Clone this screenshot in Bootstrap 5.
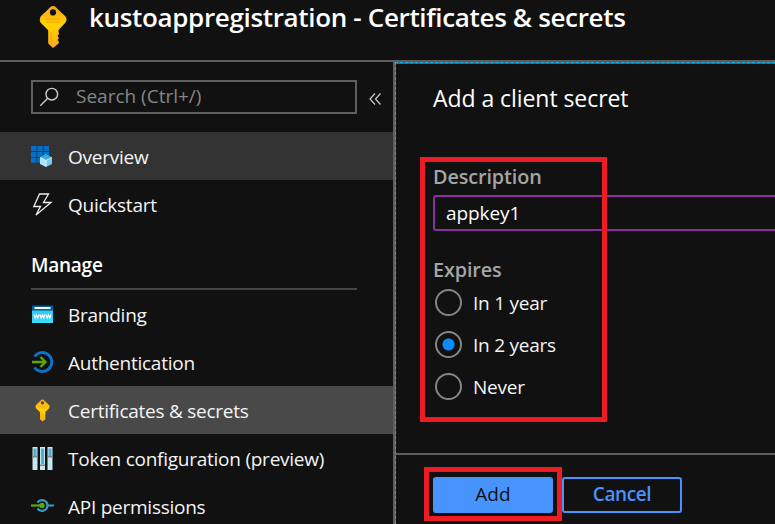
<!DOCTYPE html>
<html lang="en">
<head>
<meta charset="utf-8">
<title>kustoappregistration - Certificates &amp; secrets</title>
<meta name="viewport" content="width=device-width, initial-scale=1">
<link href="https://cdn.jsdelivr.net/npm/bootstrap@5.3.0/dist/css/bootstrap.min.css" rel="stylesheet">
<style>
body{background:#111;color:#f4f4f4;font-family:"Open Sans","Noto Sans",sans-serif;font-size:19px;line-height:24px;height:524px;overflow:hidden}
.topbar{height:62px;border-bottom:2px solid #5e5e5e;padding-left:38px}
.topbar svg{margin-top:5px}
.title{font-size:26px;line-height:34px;font-weight:600;color:#fff;margin:0 0 0 21px;letter-spacing:-.34px;white-space:nowrap}
.side{width:393px;padding-top:18px}
.search{width:326px;height:34px;margin-left:31px;border:2px solid #5e5e5e;padding:0;background:#111}
.search input{background:transparent;border:0;color:#868686;padding:0 0 2px;margin-left:17px;width:240px;height:28px;font-size:19px;outline:0}
.search input::placeholder{color:#868686;opacity:1}
.search svg{margin-left:6px}
.fold{margin:4px 0 0 12px}
.side .nav-item{height:48px;padding:2px 0 0 31px;letter-spacing:-.25px;white-space:nowrap}
.side .nav-item svg{width:23px;height:23px;flex:none;margin:0 14px 2px 0}
.side .first{margin-top:18px}
.hov{background:#333}
.cur{background:#494949}
.group-title{font-size:19px;line-height:24px;font-weight:600;color:#fff;margin:25px 0 0 31px;letter-spacing:-.25px;width:326px;height:37px;border-bottom:2px solid #444}
.blade{border-left:2px solid #5e5e5e;background:#111}
.focus-edge{border:solid #5e5e5e;border-width:2px 0 0 1px;position:relative}
.focus-edge::before{content:"";position:absolute;left:-1px;top:-2px;right:0;bottom:0;pointer-events:none;border:dashed #00b4f0;border-width:1px 0 0 1px}
.blade-body{height:389px;padding:20px 0 0 37px}
.blade-title{font-size:23px;line-height:28px;height:30px;letter-spacing:-.06px;color:#fff;margin:0}
.lab{font-size:19.8px;font-weight:600;color:#a5a5a5;letter-spacing:-.1px;line-height:26px;margin:0}
.desc-lab{margin-top:50px;height:31px}
.exp-lab{margin-top:26px;height:25px}
.desc{height:36px;border:2px solid #8a2da5;border-right:0;border-radius:3px 0 0 3px;background:#111;color:#fff;font-size:19px;padding:0 0 1px 11px;letter-spacing:-.1px;width:100%;outline:0}
.opt{height:42px;padding-left:2px;letter-spacing:-.25px}
.opt input{appearance:none;width:27px;height:27px;border:2px solid #858585;border-radius:50%;margin:0 11px 2px 0;background:transparent}
.opt input:checked{background:radial-gradient(circle,#0a8bff 0 5.7px,transparent 6.4px)}
.blade-foot{height:71px;border-top:2px solid #5e5e5e;padding:22px 0 0 37px;gap:9px}
.act{width:120px;height:36px;padding:0 0 2px;border-radius:3px;border:2px solid #4894fe;font-size:19px;line-height:24px;font-weight:600;letter-spacing:-.4px;color:#4894fe;background:#111}
.act.go{background:#4894fe;color:#111;font-weight:500;letter-spacing:0}
.callout-box{position:absolute;border:5px solid #ed1c24;pointer-events:none}
.box-form{left:24px;top:93px;width:187px;height:265px}
.box-add{left:28px;top:403px;width:138px;height:54px}
</style>
<script src="https://cdn.jsdelivr.net/npm/bootstrap@5.3.0/dist/js/bootstrap.bundle.min.js"></script>
</head>
<body class="d-flex flex-column">
<svg width="0" height="0" class="position-absolute" aria-hidden="true">
  <defs>
    <linearGradient id="gold" x2="0" y2="1"><stop offset="0" stop-color="#f9a31c"/><stop offset=".45" stop-color="#ffd400"/><stop offset="1" stop-color="#ffab1a"/></linearGradient>
    <linearGradient id="sky" x2="0" y2="1"><stop offset="0" stop-color="#32c8ee"/><stop offset="1" stop-color="#3fdcfb"/></linearGradient>
    <symbol id="key" viewBox="0 0 30 44">
      <path fill="url(#gold)" fill-rule="evenodd" d="M15 1C17.500 1 18.500 3 20 4.500L27 11C29 13 29 15.500 27.500 17.500L21 24.500C20.500 25 20.500 26 20.500 26.500L21 29L19.500 31L21 33L19.500 35L21 37L20.500 38.500L15 43L10.200 38.500V26.500C10.200 25.500 10 25 9.500 24.500L2.500 17.500C1.500 15.500 1.500 13 3 11L10 4.500C11.500 3 12.500 1 15 1ZM15 4.300A3.100 3.100 0 1 0 15 10.500A3.100 3.100 0 1 0 15 4.300Z"/>
      <path stroke="#ff9b1f" stroke-width="1.200" d="M8 14.200H22M8 17H22M13 27.500V38"/>
    </symbol>
  </defs>
</svg>
<header class="topbar d-flex align-items-start flex-shrink-0">
  <svg width="30" height="44"><use href="#key"/></svg>
  <h1 class="title">kustoappregistration - Certificates &amp; secrets</h1>
</header>
<main class="d-flex flex-grow-1">
  <nav class="side flex-shrink-0">
    <div class="d-flex align-items-center">
      <div class="search d-flex align-items-center">
        <svg width="20" height="20" viewBox="0 0 20 20" fill="none" stroke="#ccc" stroke-width="1.400"><circle cx="12.800" cy="7.200" r="5.800"/><path d="M8.700 11.300L1.300 18.700"/></svg>
        <input placeholder="Search (Ctrl+/)" aria-label="Search">
      </div>
      <svg class="fold" width="13" height="14" viewBox="0 0 13 14" fill="none" stroke="#ccc" stroke-width="1.200"><path d="M6 1.500L1 7L6 12.500M11.500 1.500L6.500 7L11.500 12.500"/></svg>
    </div>
    <div class="nav-item first hov d-flex align-items-center">
      <svg viewBox="0 0 23 23"><path fill="#0070c8" d="M0 1h5.500v5H0zM6.300 1h5.500v5H6.300zM12.600 1h5.400v5h-5.400zM0 6.900h5.500v5H0zM6.300 6.900h5.500v5H6.300zM12.600 6.900h5.400v5h-5.400zM0 12.800h5.500v5H0zM6.300 12.800h4v5h-4z"/><path fill="#38a9dc" d="M15 9L21 12.300L15 15.300L9 12.300Z"/><path fill="#aee3f7" d="M9 12.300L15 15.300V22L9 19Z"/><path fill="#78cbec" d="M21 12.300L15 15.300V22L21 19Z"/><path d="M9.200 12.500L15 15.400L20.800 12.500M15 15.400V21.500" stroke="#eefaff" stroke-width=".8" fill="none"/></svg>Overview</div>
    <div class="nav-item d-flex align-items-center">
      <svg viewBox="0 0 23 23" fill="none" stroke="#eee" stroke-width="1.300"><path d="M8.500 1H17.500L12.500 9.500H20L5 22L9.500 13.500H2.800Z"/></svg>Quickstart</div>
    <h2 class="group-title">Manage</h2>
    <div class="nav-item d-flex align-items-center">
      <svg viewBox="0 0 23 23"><path fill="#005ba1" d="M1 2.500h21v5.500H1z"/><path fill="#fff" d="M3.500 4h16v2h-16z"/><path fill="url(#sky)" d="M1 7.500h21V20H1z"/><path fill="none" stroke="#fff" stroke-width="1.100" d="M3 11.500l1.200 3.500 1.300-3 1.300 3L8 11.500M9 11.500l1.200 3.500 1.300-3 1.300 3 1.200-3.500M15 11.500l1.200 3.500 1.300-3 1.300 3 1.200-3.500"/></svg>Branding</div>
    <div class="nav-item d-flex align-items-center">
      <svg viewBox="0 0 23 23" fill="none"><path stroke="#0a74c9" stroke-width="2.800" d="M3.500 5.500A9.500 9.500 0 1 1 3.500 16.500"/><path stroke="#5ea600" stroke-width="2.400" d="M1 11H14.500M9.500 6L14.500 11L9.500 16"/></svg>Authentication</div>
    <div class="nav-item cur d-flex align-items-center">
      <svg><use href="#key"/></svg>Certificates &amp; secrets</div>
    <div class="nav-item d-flex align-items-center">
      <svg viewBox="0 0 23 23"><path fill="#c9e5ef" d="M1.500 0H6.500v23h-5zM9 0h5v23H9zM16.500 0h5v23h-5z"/><path fill="#4faed6" d="M2.500 1.500h3v7.500h-3zM10 1.500h3v15.500h-3zM17.500 1.500h3v7.500h-3z"/><path fill="#858585" d="M1.500 9h5v1.500h-5zM9 17.500h5V19H9zM16.500 9h5v1.500h-5z"/></svg>Token configuration (preview)</div>
    <div class="nav-item d-flex align-items-center">
      <svg viewBox="0 0 23 23" fill="none"><path stroke="#3999c6" stroke-width="2.200" d="M6.500 7.500A5.500 5.500 0 0 1 16.500 10.500A5.500 5.500 0 0 1 6.500 13.500M17 10.500H23"/><path stroke="#5ea600" stroke-width="2.200" d="M0 10.500H9"/><circle cx="11" cy="10.500" r="2.700" fill="#5ea600"/></svg>API permissions</div>
  </nav>
  <section class="blade flex-grow-1">
    <div class="focus-edge">
      <div class="blade-body">
        <h2 class="blade-title">Add a client secret</h2>
        <p class="lab desc-lab">Description</p>
        <input class="desc" value="appkey1" aria-label="Description">
        <p class="lab exp-lab">Expires</p>
        <label class="opt d-flex align-items-center"><input type="radio" name="exp">In 1 year</label>
        <label class="opt d-flex align-items-center"><input type="radio" name="exp" checked>In 2 years</label>
        <label class="opt d-flex align-items-center"><input type="radio" name="exp">Never</label>
      </div>
      <div class="blade-foot d-flex align-items-start">
        <button class="btn act go">Add</button>
        <button class="btn act">Cancel</button>
      </div>
      <div class="callout-box box-form"></div>
      <div class="callout-box box-add"></div>
    </div>
  </section>
</main>
</body>
</html>
